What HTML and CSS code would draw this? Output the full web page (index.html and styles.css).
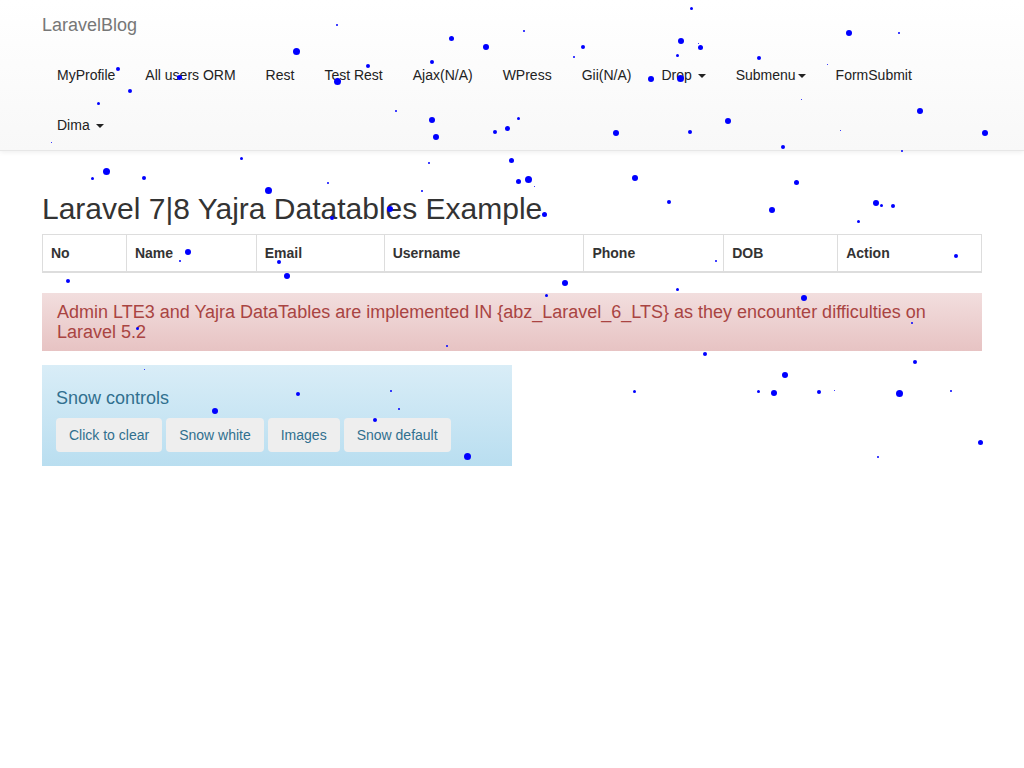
FILE: index.html
```html
<!DOCTYPE html>
<html>
<head>
<meta charset="utf-8">
<title>LaravelBlog</title>
<link rel="stylesheet" href="styles.css">
</head>
<body>
<nav class="navbar">
  <div class="container">
    <div class="navbar-header"><a class="brand" href="#">LaravelBlog</a></div>
    <ul class="nav">
      <li><a href="#">MyProfile</a></li>
      <li><a href="#">All users ORM</a></li>
      <li><a href="#">Rest</a></li>
      <li><a href="#">Test Rest</a></li>
      <li><a href="#">Ajax(N/A)</a></li>
      <li><a href="#">WPress</a></li>
      <li><a href="#">Gii(N/A)</a></li>
      <li><a href="#">Drop <span class="caret"></span></a></li>
      <li><a href="#">Submenu<span class="caret"></span></a></li>
      <li><a href="#">FormSubmit</a></li>
      <li><a href="#">Dima <span class="caret"></span></a></li>
    </ul>
  </div>
</nav>

<main class="container">
  <h1 class="title">Laravel 7|8 Yajra Datatables Example</h1>
  <table class="table">
    <thead>
      <tr>
        <th class="c-no">No</th>
        <th class="c-name">Name</th>
        <th class="c-email">Email</th>
        <th class="c-user">Username</th>
        <th class="c-phone">Phone</th>
        <th class="c-dob">DOB</th>
        <th class="c-action">Action</th>
      </tr>
    </thead>
    <tbody></tbody>
  </table>

  <div class="alert">Admin LTE3 and Yajra DataTables are implemented IN {abz_Laravel_6_LTS} as they encounter difficulties on Laravel 5.2</div>

  <div class="snow-box">
    <h4 class="snow-title">Snow controls</h4>
    <div class="btns">
      <button class="btn">Click to clear</button>
      <button class="btn">Snow white</button>
      <button class="btn">Images</button>
      <button class="btn">Snow default</button>
    </div>
  </div>
</main>

<div class="snow">
<i style="left:689.5px;top:6.5px;width:3px;height:3px"></i>
<i style="left:336px;top:24px;width:2px;height:2px"></i>
<i style="left:523px;top:30px;width:2px;height:2px"></i>
<i style="left:846px;top:30px;width:6px;height:6px"></i>
<i style="left:898px;top:32px;width:2px;height:2px"></i>
<i style="left:448.5px;top:35.5px;width:5px;height:5px"></i>
<i style="left:678px;top:38px;width:6px;height:6px"></i>
<i style="left:697.5px;top:42.5px;width:1px;height:1px"></i>
<i style="left:483px;top:44px;width:6px;height:6px"></i>
<i style="left:581px;top:45px;width:4px;height:4px"></i>
<i style="left:697.5px;top:44.5px;width:5px;height:5px"></i>
<i style="left:292.5px;top:47.5px;width:7px;height:7px"></i>
<i style="left:573px;top:56px;width:2px;height:2px"></i>
<i style="left:675.5px;top:53.5px;width:3px;height:3px"></i>
<i style="left:757px;top:56px;width:4px;height:4px"></i>
<i style="left:430px;top:60px;width:4px;height:4px"></i>
<i style="left:366px;top:64px;width:4px;height:4px"></i>
<i style="left:116px;top:67px;width:4px;height:4px"></i>
<i style="left:826.5px;top:63.5px;width:1px;height:1px"></i>
<i style="left:176.5px;top:74.5px;width:5px;height:5px"></i>
<i style="left:333.5px;top:77.5px;width:7px;height:7px"></i>
<i style="left:648px;top:76px;width:6px;height:6px"></i>
<i style="left:676.5px;top:74.5px;width:7px;height:7px"></i>
<i style="left:128px;top:89px;width:4px;height:4px"></i>
<i style="left:96.5px;top:101.5px;width:3px;height:3px"></i>
<i style="left:800.5px;top:98.5px;width:1px;height:1px"></i>
<i style="left:395px;top:110px;width:2px;height:2px"></i>
<i style="left:917px;top:108px;width:6px;height:6px"></i>
<i style="left:516.5px;top:116.5px;width:3px;height:3px"></i>
<i style="left:429px;top:117px;width:6px;height:6px"></i>
<i style="left:725px;top:118px;width:6px;height:6px"></i>
<i style="left:504.5px;top:125.5px;width:5px;height:5px"></i>
<i style="left:493px;top:130px;width:4px;height:4px"></i>
<i style="left:688px;top:130px;width:4px;height:4px"></i>
<i style="left:613px;top:130px;width:6px;height:6px"></i>
<i style="left:982px;top:130px;width:6px;height:6px"></i>
<i style="left:839.5px;top:129.5px;width:1px;height:1px"></i>
<i style="left:433px;top:134px;width:6px;height:6px"></i>
<i style="left:50.5px;top:141.5px;width:1px;height:1px"></i>
<i style="left:781px;top:145px;width:4px;height:4px"></i>
<i style="left:901px;top:150px;width:2px;height:2px"></i>
<i style="left:239.5px;top:156.5px;width:3px;height:3px"></i>
<i style="left:508.5px;top:157.5px;width:5px;height:5px"></i>
<i style="left:428px;top:162px;width:2px;height:2px"></i>
<i style="left:102.5px;top:167.5px;width:7px;height:7px"></i>
<i style="left:90.5px;top:176.5px;width:3px;height:3px"></i>
<i style="left:142px;top:176px;width:4px;height:4px"></i>
<i style="left:632px;top:175px;width:6px;height:6px"></i>
<i style="left:524.5px;top:175.5px;width:7px;height:7px"></i>
<i style="left:515.5px;top:178.5px;width:5px;height:5px"></i>
<i style="left:793.5px;top:179.5px;width:5px;height:5px"></i>
<i style="left:327px;top:182px;width:2px;height:2px"></i>
<i style="left:533.5px;top:185.5px;width:1px;height:1px"></i>
<i style="left:264.5px;top:186.5px;width:7px;height:7px"></i>
<i style="left:421px;top:190px;width:2px;height:2px"></i>
<i style="left:667px;top:200px;width:4px;height:4px"></i>
<i style="left:873px;top:200px;width:6px;height:6px"></i>
<i style="left:879.5px;top:203.5px;width:3px;height:3px"></i>
<i style="left:891px;top:204px;width:4px;height:4px"></i>
<i style="left:387px;top:206px;width:6px;height:6px"></i>
<i style="left:769px;top:207px;width:6px;height:6px"></i>
<i style="left:541.5px;top:211.5px;width:5px;height:5px"></i>
<i style="left:330px;top:216px;width:4px;height:4px"></i>
<i style="left:856.5px;top:219.5px;width:3px;height:3px"></i>
<i style="left:185px;top:249px;width:6px;height:6px"></i>
<i style="left:954px;top:254px;width:4px;height:4px"></i>
<i style="left:179px;top:260px;width:2px;height:2px"></i>
<i style="left:715px;top:260px;width:2px;height:2px"></i>
<i style="left:277px;top:260px;width:4px;height:4px"></i>
<i style="left:284px;top:273px;width:6px;height:6px"></i>
<i style="left:66px;top:279px;width:4px;height:4px"></i>
<i style="left:562px;top:280px;width:6px;height:6px"></i>
<i style="left:675.5px;top:287.5px;width:3px;height:3px"></i>
<i style="left:544.5px;top:293.5px;width:3px;height:3px"></i>
<i style="left:801px;top:295px;width:6px;height:6px"></i>
<i style="left:911px;top:322px;width:2px;height:2px"></i>
<i style="left:135.5px;top:326.5px;width:3px;height:3px"></i>
<i style="left:446px;top:345px;width:2px;height:2px"></i>
<i style="left:703px;top:352px;width:4px;height:4px"></i>
<i style="left:913px;top:360px;width:4px;height:4px"></i>
<i style="left:143.5px;top:368.5px;width:1px;height:1px"></i>
<i style="left:782px;top:372px;width:6px;height:6px"></i>
<i style="left:390px;top:390px;width:2px;height:2px"></i>
<i style="left:632.5px;top:389.5px;width:3px;height:3px"></i>
<i style="left:756.5px;top:389.5px;width:3px;height:3px"></i>
<i style="left:817px;top:390px;width:4px;height:4px"></i>
<i style="left:833.5px;top:389.5px;width:1px;height:1px"></i>
<i style="left:950px;top:390px;width:2px;height:2px"></i>
<i style="left:771px;top:390px;width:6px;height:6px"></i>
<i style="left:895.5px;top:389.5px;width:7px;height:7px"></i>
<i style="left:296px;top:392px;width:4px;height:4px"></i>
<i style="left:398px;top:408px;width:2px;height:2px"></i>
<i style="left:212px;top:408px;width:6px;height:6px"></i>
<i style="left:373px;top:418px;width:4px;height:4px"></i>
<i style="left:977.5px;top:439.5px;width:5px;height:5px"></i>
<i style="left:463.5px;top:452.5px;width:7px;height:7px"></i>
<i style="left:877px;top:456px;width:2px;height:2px"></i>
</div>
</body>
</html>
```

FILE: styles.css
```css
* { box-sizing: border-box; }

html, body {
  margin: 0;
  padding: 0;
}

body {
  font-family: "Liberation Sans", Arial, sans-serif;
  font-size: 14px;
  line-height: 20px;
  color: #333;
  background: #fff;
  position: relative;
  min-height: 768px;
}

.container {
  width: 970px;
  margin: 0 auto;
  padding: 0 15px;
}

/* Navbar */
.navbar {
  background: linear-gradient(to bottom, #fff 0, #f8f8f8 100%);
  border-bottom: 1px solid #e7e7e7;
  box-shadow: inset 0 1px 0 rgba(255,255,255,.15), 0 1px 5px rgba(0,0,0,.075);
}

.navbar-header {
  height: 50px;
}

.brand {
  display: block;
  padding: 15px 0;
  font-size: 18px;
  line-height: 20px;
  color: #777;
  text-decoration: none;
}

.nav {
  list-style: none;
  margin: 0;
  padding: 0;
  display: flex;
  flex-wrap: wrap;
}

.nav a {
  display: block;
  padding: 15px;
  line-height: 20px;
  color: #222;
  text-decoration: none;
}

.caret {
  display: inline-block;
  width: 0;
  height: 0;
  margin-left: 2px;
  vertical-align: middle;
  border-top: 4px solid #222;
  border-right: 4px solid transparent;
  border-left: 4px solid transparent;
}

/* Heading */
.title {
  margin: 41px 0 9px;
  font-size: 30px;
  font-weight: 400;
  line-height: 33px;
  color: #333;
}

/* Table */
.table {
  width: 100%;
  border-collapse: collapse;
  border: 1px solid #ddd;
  margin-bottom: 20px;
}

.table th {
  text-align: left;
  font-weight: 700;
  padding: 8px;
  line-height: 20px;
  border: 1px solid #ddd;
  border-bottom: 2px solid #ddd;
  color: #333;
}

.c-no { width: 84px; }
.c-name { width: 130px; }
.c-email { width: 128px; }
.c-user { width: 200px; }
.c-phone { width: 140px; }
.c-dob { width: 114px; }
.c-action { width: 144px; }

/* Alert */
.alert {
  padding: 9px 15px;
  margin-bottom: 14px;
  font-size: 18px;
  line-height: 20px;
  color: #a94442;
  background: linear-gradient(to bottom, #f2dede 0, #e7c3c3 100%);
}

/* Snow controls */
.snow-box {
  width: 470px;
  padding: 14px;
  color: #31708f;
  background: linear-gradient(to bottom, #d9edf7 0, #b9def0 100%);
}

.snow-title {
  margin: 9px 0 10px;
  font-size: 18px;
  font-weight: 400;
  line-height: 20px;
}

.btns {
  display: flex;
  gap: 4px;
}

.btn {
  font-family: "Liberation Sans", Arial, sans-serif;
  font-size: 14px;
  line-height: 20px;
  padding: 6px 12px;
  border: 1px solid transparent;
  border-radius: 4px;
  background: #eee;
  color: #31708f;
  cursor: pointer;
}

/* Snow overlay */
.snow {
  position: absolute;
  top: 0;
  left: 0;
  width: 100%;
  height: 100%;
  pointer-events: none;
}

.snow i {
  position: absolute;
  display: block;
  border-radius: 50%;
  background: #0000ff;
}
```
